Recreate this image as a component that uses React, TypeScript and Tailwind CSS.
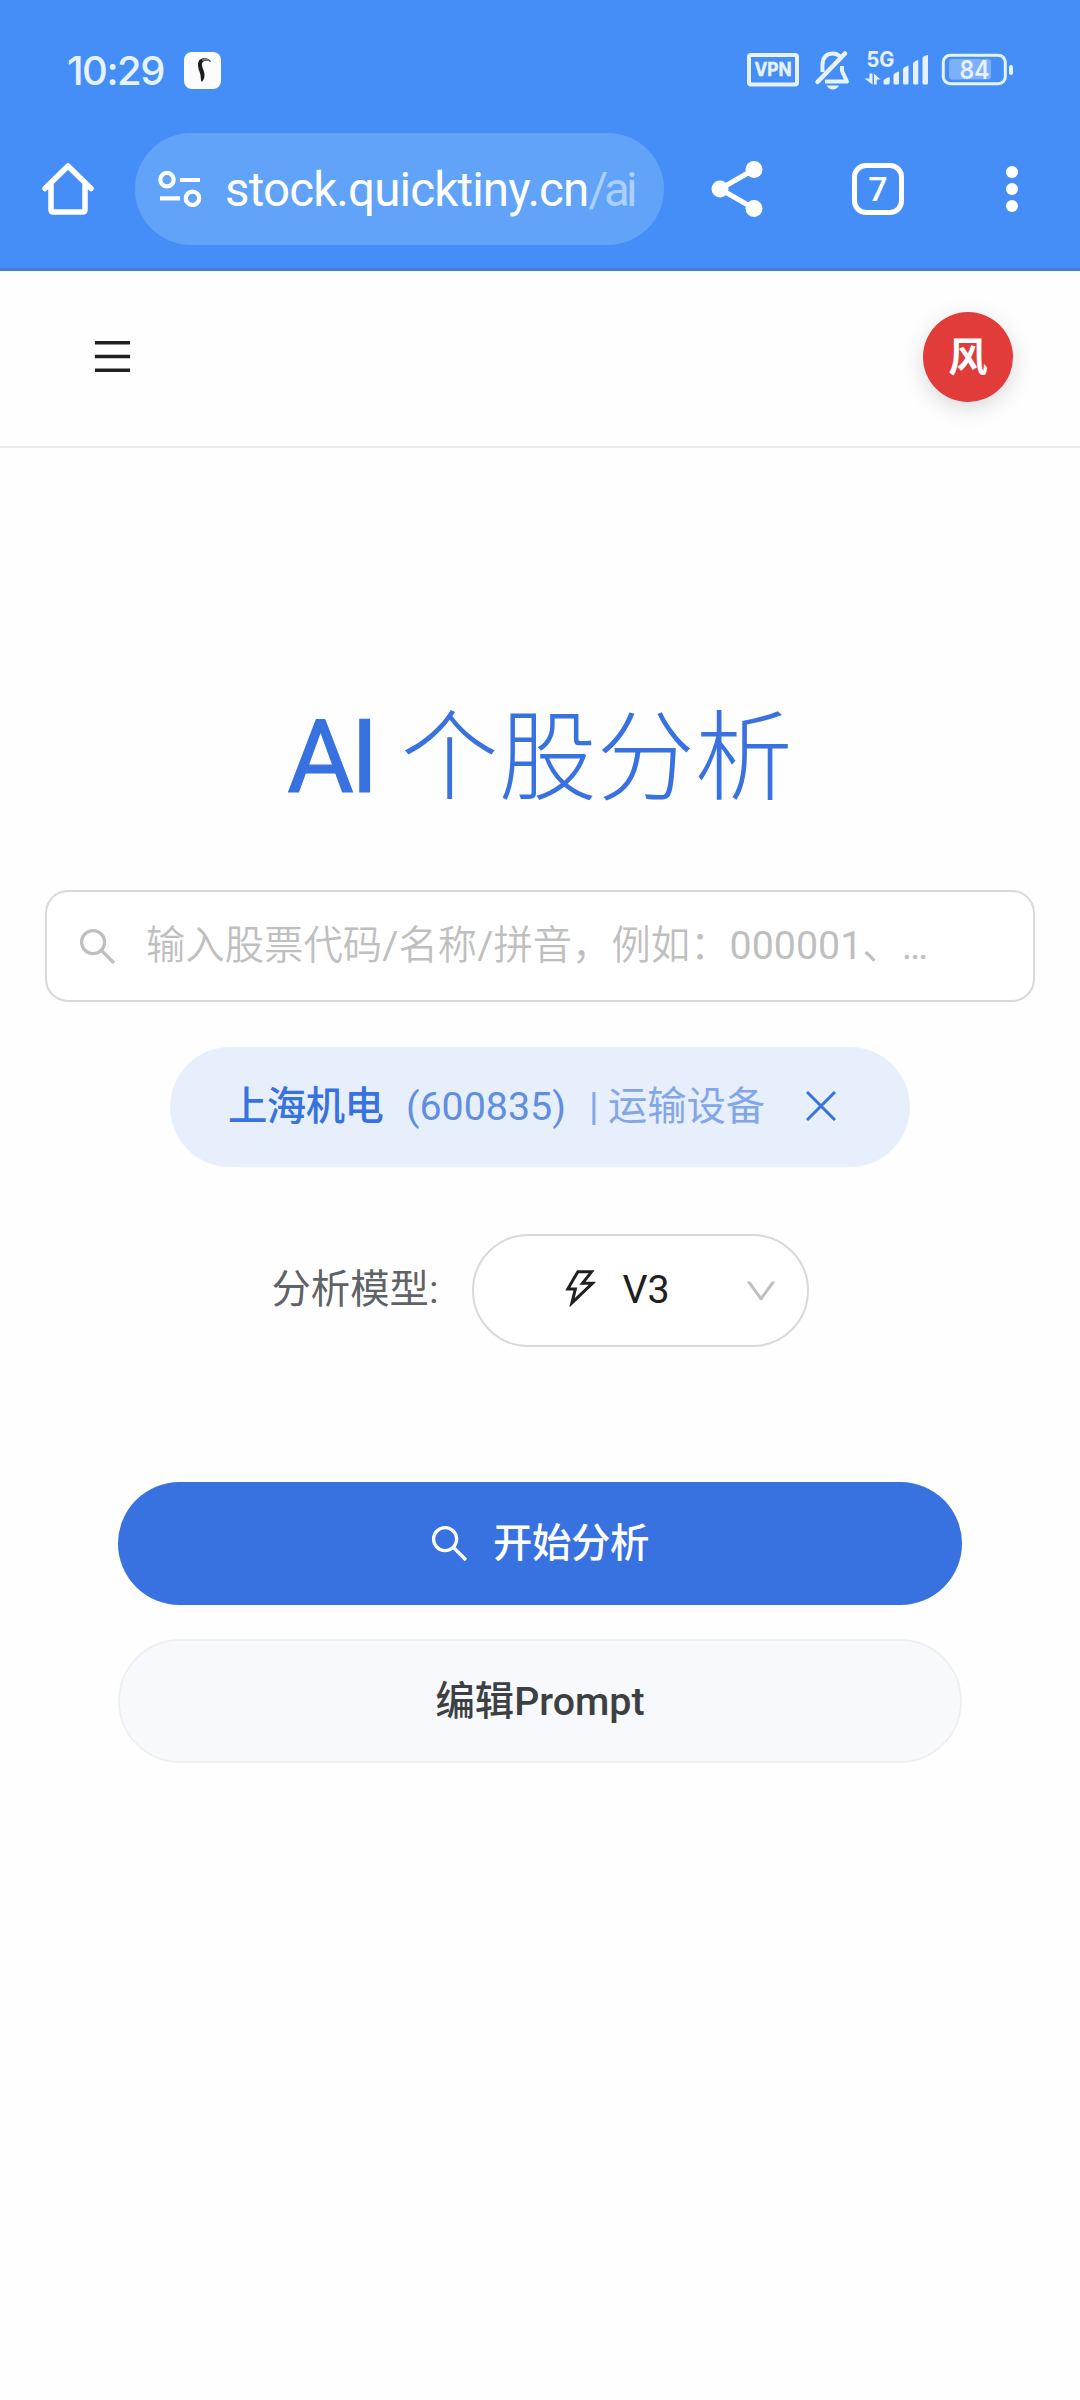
import type { ReactNode } from "react";
import {
  AiOutlineDown,
  AiOutlineMenu,
  AiOutlineSearch,
  AiOutlineThunderbolt,
} from "react-icons/ai";

function AppBadge() {
  return (
    <svg width="37" height="37" viewBox="0 0 37 37" className="ml-[20px]">
      <rect width="37" height="37" rx="8" fill="#fcfcfc" />
      <path d="M14 13C14 8 17 6 21 6.300C25 6.500 27 9 27 10C24 8.500 20 8 18 11C17.500 16 20.500 18 20.500 23C20.500 27 19 28 18 30C16.500 29 17 26 16.500 23C16 20 14 17 14 13Z" fill="#1c1c1c" />
      <path d="M18 7Q24 5 27 10Q23 7.500 18.500 9Z" fill="#777" />
    </svg>
  );
}

function StatusIcons() {
  return (
    <svg width="270" height="62" viewBox="745 39 270 62" fill="#e6f2ff">
      <rect x="749" y="55" width="48" height="29.500" rx="2" fill="none" stroke="#e6f2ff" strokeWidth="4" />
      <text x="773" y="76.300" textAnchor="middle" fontFamily="Inter, sans-serif" fontWeight="700" fontSize="19" stroke="#e6f2ff" strokeWidth="0.500" textLength="37" lengthAdjust="spacingAndGlyphs">VPN</text>
      <path d="M822.500 72V65C822.500 57 827 53.500 833 53.500C836.500 53.500 838.500 55 840.500 57M842 66V71L847 81.500H825" fill="none" stroke="#e6f2ff" strokeWidth="4" strokeLinejoin="round" />
      <path d="M817.500 82L845 53.500" stroke="#e6f2ff" strokeWidth="4.500" strokeLinecap="round" />
      <path d="M826.500 85.500H839Q837 89.500 832.700 89.500Q829 89.500 826.500 85.500Z" />
      <text x="880.500" y="67.300" textAnchor="middle" fontFamily="Inter, sans-serif" fontWeight="700" fontSize="21.500" textLength="28" lengthAdjust="spacingAndGlyphs">5G</text>
      <path d="M869.500 73.500H872.500V84.500L864.500 78.500H869.500ZM874 73.500L880.500 79.500H876.800V84.500H874Z" />
      <path d="M883.500 81Q883.500 79 889.700 77V83Q889.700 84.500 888 84.500H885Q883.500 84.500 883.500 83ZM893.500 75Q894 73 899 71.500V83Q899 84.500 897.500 84.500H895Q893.500 84.500 893.500 83ZM903 69Q903.500 67 908.500 65.500V83Q908.500 84.500 907 84.500H904.500Q903 84.500 903 83ZM913 63.500Q913.500 61.500 918.300 60V83Q918.300 84.500 917 84.500H914.500Q913 84.500 913 83ZM922.500 58Q923 56 928 55V83Q928 84.500 926.500 84.500H924Q922.500 84.500 922.500 83Z" />
      <rect x="943.300" y="55.300" width="62" height="28.400" rx="7" fill="none" stroke="#e6f2ff" strokeWidth="3" />
      <rect x="949" y="59" width="42" height="20.500" rx="3" fill="#7db0f9" />
      <rect x="1009" y="65" width="4" height="10" rx="2" />
      <text x="974.500" y="79.300" textAnchor="middle" fontFamily="Inter, sans-serif" fontWeight="600" fontSize="26" textLength="30" lengthAdjust="spacingAndGlyphs">84</text>
    </svg>
  );
}

function HomeIcon() {
  return (
    <svg width="52" height="52" viewBox="0 0 52 52" fill="none" stroke="#fff" strokeWidth="5.500" strokeLinejoin="round" strokeLinecap="round">
      <path d="M3 25.500L26 3L49 25.500" />
      <path d="M9 22V46.500Q9 49 11.500 49H40.500Q43 49 43 46.500V22" />
    </svg>
  );
}

function TuneIcon() {
  return (
    <svg width="44" height="36" viewBox="0 0 44 36" fill="none" stroke="#fff" strokeWidth="4.200">
      <circle cx="9" cy="8.700" r="6.700" />
      <circle cx="34.500" cy="27.300" r="6.700" />
      <path d="M22 9H42M2 27.300H22" />
    </svg>
  );
}

function ShareIcon() {
  return (
    <svg width="52" height="56" viewBox="0 0 52 56" fill="#fff">
      <path d="M43 8.500L9 28L43 47.500" fill="none" stroke="#fff" strokeWidth="5" />
      <circle cx="43" cy="8.500" r="8.500" />
      <circle cx="9" cy="28" r="8.500" />
      <circle cx="43" cy="47.500" r="8.500" />
    </svg>
  );
}

function CloseIcon() {
  return (
    <svg width="30" height="30" viewBox="0 0 30 30" stroke="#3871e0" strokeWidth="3">
      <path d="M1 1L29 29M29 1L1 29" />
    </svg>
  );
}

function StatusBar() {
  return (
    <div className="flex h-[133px] items-start justify-between pr-[65px] pl-[67px]">
      <div className="mt-[52px] flex h-[37px] items-center">
        <span className="-mt-[1px] w-[97px] font-[Inter] text-[40px] leading-[37px] font-medium tracking-[-1.500px] whitespace-nowrap text-[#e6f2ff]">10:29</span>
        <AppBadge />
      </div>
      <div className="mt-[39px]">
        <StatusIcons />
      </div>
    </div>
  );
}

function AddressBar() {
  return (
    <div className="flex h-[112px] items-center pl-[42px]">
      <HomeIcon />
      <div className="ml-[41px] flex h-[112px] w-[529px] items-center rounded-full bg-[#61a3f8] pl-[23px]">
        <TuneIcon />
        <span className="mt-[2px] ml-[23px] text-[47.500px] leading-[56px] tracking-[-0.850px] whitespace-nowrap text-white">
          stock.quicktiny.cn<span className="tracking-[-4px] text-[#abd0fc]">/ai</span>
        </span>
      </div>
      <div className="ml-[47px]">
        <ShareIcon />
      </div>
      <div className="ml-[89px] flex size-[52px] items-center justify-center rounded-[14px] border-[5.500px] border-white text-[34px] leading-none font-medium text-white">
        7
      </div>
      <div className="ml-[102px] flex flex-col gap-[5px]">
        <i className="size-[12px] rounded-full bg-white" />
        <i className="size-[12px] rounded-full bg-white" />
        <i className="size-[12px] rounded-full bg-white" />
      </div>
    </div>
  );
}

function Pill({ className, children }: { className: string; children: ReactNode }) {
  return (
    <button className={`flex w-[844px] items-center justify-center rounded-full font-medium ${className}`}>
      {children}
    </button>
  );
}

export default function App() {
  return (
    <div className="flex h-[2400px] w-[1080px] flex-col overflow-hidden bg-[#fefefe] font-[Roboto,'Noto_Sans_CJK_SC',sans-serif] text-[39.375px] leading-[62px]">
      <div className="h-[271px] shrink-0 border-b-[3px] border-[#407dd6] bg-[#458ef7]">
        <StatusBar />
        <AddressBar />
      </div>

      <header className="flex h-[177px] shrink-0 items-center justify-between border-b-2 border-[#e8eaed] pr-[67px] pl-[90px]">
        <AiOutlineMenu size={45} color="#202020" className="mb-[5px]" />
        <div className="mb-[3px] flex size-[90px] items-center justify-center rounded-full bg-[#e13b3a] pt-[2px] font-bold text-white shadow-[0_6px_22px_rgba(0,0,0,0.15)]">
          风
        </div>
      </header>

      <main className="flex flex-col items-center">
        <h1 className="mt-[231px] h-[156px] text-[102px] leading-[156px] font-normal whitespace-nowrap text-[#3871e0]">
          <span className="tracking-[-3px] [-webkit-text-stroke:1.200px_#3871e0]">AI</span> <span className="text-[98px] font-light">个股分析</span>
        </h1>

        <div className="mt-[55px] flex h-[112px] w-[990px] items-center rounded-[23px] border-2 border-[#d9d9d9] bg-white pl-[28px] text-[#bfbfbf]">
          <AiOutlineSearch size={45} />
          <span className="ml-[26px] font-[350] whitespace-nowrap">
            输入股票代码<span className="font-normal">/</span>名称<span className="font-normal">/</span>拼音，例如：<span className="font-normal">000001</span>、<span className="font-normal">…</span>
          </span>
        </div>

        <div className="mt-[45px] flex h-[120px] w-[740px] items-center rounded-full bg-[#e7effd] pl-[58px] whitespace-nowrap text-[#3871e0]">
          <span className="w-[157px] font-medium tracking-[-0.500px]">上海机电</span>
          <span className="ml-[21px] text-[#608ee0]">(600835)</span>
          <span className="ml-[23px] w-[176px] tracking-[-0.100px] text-[#83a7e6]">| 运输设备</span>
          <span className="-mt-[2px] ml-[41px]"><CloseIcon /></span>
        </div>

        <div className="mt-[67px] flex h-[113px] w-[537px] items-center">
          <span className="-mt-[2px] w-[200px] whitespace-nowrap text-[#5f6368]">分析模型:</span>
          <div className="flex h-[113px] w-[337px] items-center rounded-full border-2 border-[#d9d9d9] bg-white text-[#202020]">
            <AiOutlineThunderbolt size={45} className="-mt-[4px] ml-[84px]" />
            <span className="-mt-[1px] ml-[20px]">V3</span>
            <AiOutlineDown size={38} color="#bfbfbf" className="ml-[72px]" />
          </div>
        </div>

        <div className="mt-[135px] flex flex-col gap-[34px]">
          <Pill className="h-[123px] bg-[#3871e0] pr-[4px] text-white">
            <AiOutlineSearch size={45} className="-mt-[1px]" />
            <span className="mt-[1px] ml-[21px] tracking-[-0.300px]">开始分析</span>
          </Pill>
          <Pill className="h-[124px] border-2 border-[#eeeff0] bg-[#f8f9fc] pt-[1px] text-[#3c4043]">编辑Prompt</Pill>
        </div>
      </main>
    </div>
  );
}
